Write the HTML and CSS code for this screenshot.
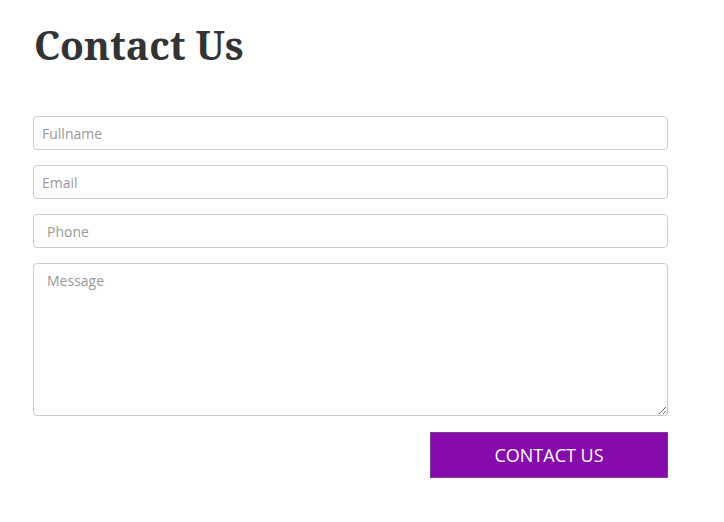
FILE: index.html
```html
<!DOCTYPE html>
<html>
<head>
<meta charset="utf-8">
<link rel="stylesheet" href="styles.css">
</head>
<body>
<div class="page">
  <h1 class="title">Contact Us</h1>
  <form class="form">
    <input class="field pad-a" type="text" placeholder="Fullname">
    <input class="field pad-a" type="text" placeholder="Email">
    <input class="field pad-b" type="text" placeholder="Phone">
    <textarea class="field area pad-b" placeholder="Message"></textarea>
    <div class="actions">
      <button class="btn" type="button">CONTACT US</button>
    </div>
  </form>
</div>
</body>
</html>
```
FILE: styles.css
```css
html, body {
  margin: 0;
  padding: 0;
  background: #fff;
}
.page {
  padding: 22px 56px 0 33px;
  font-family: "Open Sans", "Noto Sans", sans-serif;
}
.title {
  margin: 0 0 48px 1px;
  font-family: "Noto Serif", "Droid Serif", "DejaVu Serif", serif;
  font-weight: 700;
  font-size: 39px;
  line-height: 46px;
  color: #333;
}
.form {
  display: flex;
  flex-direction: column;
  width: 635px;
}
.field {
  box-sizing: border-box;
  width: 635px;
  height: 34px;
  margin: 0 0 15px 0;
  border: 1px solid #ccc;
  border-radius: 4px;
  font-family: "Open Sans", sans-serif;
  font-size: 14px;
  color: #555;
  background: #fff;
  outline: none;
}
.field::placeholder {
  color: #999;
}
.pad-a {
  padding: 6px 8px;
}
.pad-b {
  padding: 6px 13px;
}
.area {
  height: 153px;
  margin-bottom: 16px;
  resize: vertical;
  padding-top: 7px;
}
.actions {
  display: flex;
  justify-content: flex-end;
}
.btn {
  width: 238px;
  height: 46px;
  border: 1px solid #7d3f98;
  background: #870aab;
  color: #fff;
  font-family: "Open Sans", sans-serif;
  font-size: 18px;
  padding: 0;
  cursor: pointer;
}
```
